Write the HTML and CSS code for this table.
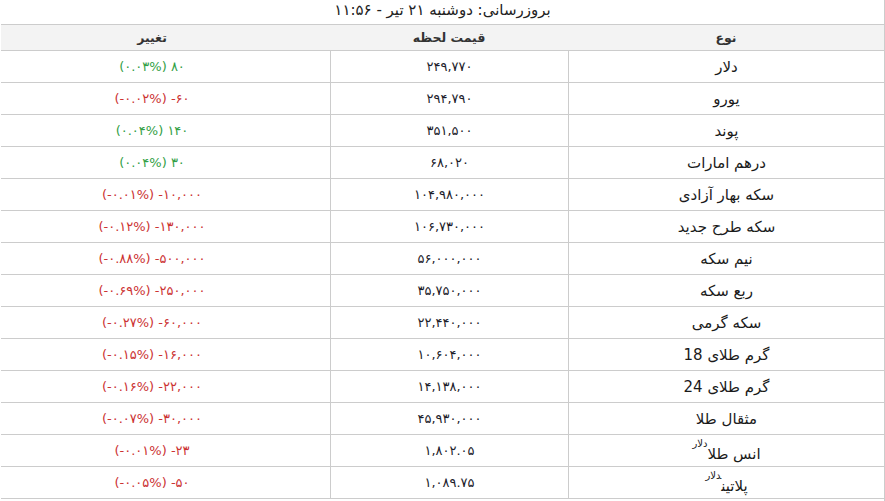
FILE: index.html
```html
<!DOCTYPE html>
<html lang="fa" dir="rtl">
<head>
<meta charset="utf-8">
<title>نرخ ارز و سکه</title>
<link rel="stylesheet" href="styles.css">
</head>
<body>
<div class="board">
  <div class="title">بروزرسانی: دوشنبه ۲۱ تیر - ۱۱:۵۶</div>
  <table class="rates">
    <thead>
      <tr>
        <th class="c-name">نوع</th>
        <th class="c-price">قیمت لحظه</th>
        <th class="c-change">تغییر</th>
      </tr>
    </thead>
    <tbody>
      <tr><td class="c-name">دلار</td><td class="c-price"><span class="num">۲۴۹,۷۷۰</span></td><td class="c-change up"><span class="num">۸۰</span> <span class="num">(۰.۰۳%)</span></td></tr>
      <tr><td class="c-name">یورو</td><td class="c-price"><span class="num">۲۹۴,۷۹۰</span></td><td class="c-change down"><span class="num">-۶۰</span> <span class="num">(-۰.۰۲%)</span></td></tr>
      <tr><td class="c-name">پوند</td><td class="c-price"><span class="num">۳۵۱,۵۰۰</span></td><td class="c-change up"><span class="num">۱۴۰</span> <span class="num">(۰.۰۴%)</span></td></tr>
      <tr><td class="c-name">درهم امارات</td><td class="c-price"><span class="num">۶۸,۰۲۰</span></td><td class="c-change up"><span class="num">۳۰</span> <span class="num">(۰.۰۴%)</span></td></tr>
      <tr><td class="c-name">سکه بهار آزادی</td><td class="c-price"><span class="num">۱۰۴,۹۸۰,۰۰۰</span></td><td class="c-change down"><span class="num">-۱۰,۰۰۰</span> <span class="num">(-۰.۰۱%)</span></td></tr>
      <tr><td class="c-name">سکه طرح جدید</td><td class="c-price"><span class="num">۱۰۶,۷۳۰,۰۰۰</span></td><td class="c-change down"><span class="num">-۱۳۰,۰۰۰</span> <span class="num">(-۰.۱۲%)</span></td></tr>
      <tr><td class="c-name">نیم سکه</td><td class="c-price"><span class="num">۵۶,۰۰۰,۰۰۰</span></td><td class="c-change down"><span class="num">-۵۰۰,۰۰۰</span> <span class="num">(-۰.۸۸%)</span></td></tr>
      <tr><td class="c-name">ربع سکه</td><td class="c-price"><span class="num">۳۵,۷۵۰,۰۰۰</span></td><td class="c-change down"><span class="num">-۲۵۰,۰۰۰</span> <span class="num">(-۰.۶۹%)</span></td></tr>
      <tr><td class="c-name">سکه گرمی</td><td class="c-price"><span class="num">۲۲,۴۴۰,۰۰۰</span></td><td class="c-change down"><span class="num">-۶۰,۰۰۰</span> <span class="num">(-۰.۲۷%)</span></td></tr>
      <tr><td class="c-name">گرم طلای 18</td><td class="c-price"><span class="num">۱۰,۶۰۴,۰۰۰</span></td><td class="c-change down"><span class="num">-۱۶,۰۰۰</span> <span class="num">(-۰.۱۵%)</span></td></tr>
      <tr><td class="c-name">گرم طلای 24</td><td class="c-price"><span class="num">۱۴,۱۳۸,۰۰۰</span></td><td class="c-change down"><span class="num">-۲۲,۰۰۰</span> <span class="num">(-۰.۱۶%)</span></td></tr>
      <tr><td class="c-name">مثقال طلا</td><td class="c-price"><span class="num">۴۵,۹۳۰,۰۰۰</span></td><td class="c-change down"><span class="num">-۳۰,۰۰۰</span> <span class="num">(-۰.۰۷%)</span></td></tr>
      <tr><td class="c-name">انس طلا<sup class="unit">دلار</sup></td><td class="c-price"><span class="num">۱,۸۰۲.۰۵</span></td><td class="c-change down"><span class="num">-۲۳</span> <span class="num">(-۰.۰۱%)</span></td></tr>
      <tr><td class="c-name">پلاتین<sup class="unit">دلار</sup></td><td class="c-price"><span class="num">۱,۰۸۹.۷۵</span></td><td class="c-change down"><span class="num">-۵۰</span> <span class="num">(-۰.۰۵%)</span></td></tr>
    </tbody>
  </table>
</div>
</body>
</html>
```

FILE: styles.css
```css
html, body {
  margin: 0;
  padding: 0;
  background: #ffffff;
}

body {
  font-family: "DejaVu Sans", "Noto Sans", sans-serif;
  font-size: 13px;
  color: #222222;
}

.board {
  width: 883px;
  border-right: 1px solid #cccccc;
  min-height: 501px;
}

.title {
  height: 24px;
  line-height: 21px;
  text-align: center;
  color: #222222;
  font-size: 15px;
}

.rates {
  width: 883px;
  border-collapse: separate;
  border-spacing: 0;
  table-layout: fixed;
}

.rates th,
.rates td {
  box-sizing: border-box;
  padding: 0;
  text-align: center;
  vertical-align: middle;
  border-bottom: 1px solid #cccccc;
}

.rates th {
  height: 27px;
  border-top: 1px solid #cccccc;
  background: #f3f3f3;
  font-weight: bold;
  color: #333333;
  font-size: 12.5px;
}

.rates th.c-name { width: 316px; }
.rates th.c-price { width: 238px; }
.rates th.c-change { width: 329px; }

.rates td {
  height: 32px;
  border-left: 1px solid #cccccc;
}

.rates td.c-change {
  border-left: none;
}

.rates .c-change {
  padding-right: 27px;
}

.rates td.c-name {
  font-size: 15px;
  color: #1a1a1a;
}

.rates td.c-price {
  color: #1c1c2a;
}

.num {
  direction: ltr;
  unicode-bidi: isolate;
}

.up { color: #33a046; }
.down { color: #cc3333; }

.unit {
  font-size: 10px;
  vertical-align: 12px;
  line-height: 1;
}
```
